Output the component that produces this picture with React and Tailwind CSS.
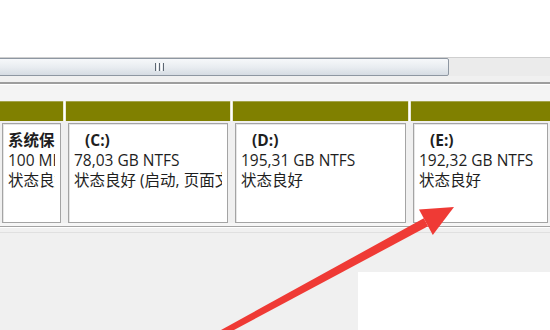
import React from 'react';

const partitions = [
  { width: 'w-[63px]', name: '系统保留', nameBold: true, size: '100 MB NTFS', status: '状态良好 (系统, 活动, 主分区)' },
  { width: 'w-[164px]', name: '(C:)', size: '78,03 GB NTFS', status: '状态良好 (启动, 页面文件, 故障转储, 主分区)' },
  { width: 'w-[175px]', name: '(D:)', size: '195,31 GB NTFS', status: '状态良好' },
  { width: 'flex-1', name: '(E:)', size: '192,32 GB NTFS', status: '状态良好' },
];

// one partition: olive header strip + white detail box
const Partition = ({ p, first }) => (
  <div className={`${p.width} flex flex-col shrink-0`}>
    <div className="h-[20px] bg-[#808000] border-t border-[#a3a34a]" />
    <div className="h-[2px]" />
    <div className="h-[100px] mx-[2px] bg-white border border-[#a4a4a4] shadow-[inset_1px_1px_0_#e6e6e6]">
      <div className="pt-[6px] pl-[5px] pr-[5px] overflow-hidden whitespace-nowrap text-[15.5px] leading-[20px] text-[#1e1e1e]">
        <div className={`font-bold overflow-hidden ${first ? '' : 'pl-[11px]'}`}>{p.name}</div>
        <div className="overflow-hidden">{p.size}</div>
        <div className="overflow-hidden">{p.status}</div>
      </div>
    </div>
  </div>
);

const Divider = () => (
  <div className="w-[3px] shrink-0 flex flex-col">
    <div className="h-[20px] bg-[#e9e9d6] flex justify-center">
      <div className="w-px bg-white" />
    </div>
    <div className="flex-1 bg-[#f0f0f0]" />
  </div>
);

export default function App() {
  return (
    <div className="w-[550px] h-[330px] relative overflow-hidden bg-[#f0f0f0] font-['Open_Sans','Noto_Sans_CJK_SC',sans-serif]">
      <div className="h-[57px] bg-white" />

      {/* horizontal scrollbar */}
      <div className="flex h-[19px] border-t border-[#cfcfcf]">
        <div className="ml-[-130px] w-[579px] shrink-0 rounded-[2px] border border-[#8e97a2] bg-gradient-to-b from-[#f6f8fa] via-[#e9edf1] to-[#d6dce3] flex items-center justify-center">
          <div className="flex gap-[1px] h-[8px]">
            <div className="w-px bg-[#5d6772]" />
            <div className="w-px bg-[#ffffff]" />
            <div className="w-px bg-[#5d6772]" />
            <div className="w-px bg-[#ffffff]" />
            <div className="w-px bg-[#5d6772]" />
          </div>
        </div>
        <div className="flex-1 bg-[#ebebeb]" />
      </div>

      <div className="h-[6px] bg-[#f0f0f0]" />
      <div className="h-[2px] bg-[#9d9d9d]" />
      <div className="h-px bg-white" />
      <div className="h-[16px] bg-[#f4f4f4]" />

      {/* partition row */}
      <div className="flex">
        {partitions.map((p, i) => (
          <React.Fragment key={p.name}>
            {i > 0 && <Divider />}
            <Partition p={p} first={i === 0} />
          </React.Fragment>
        ))}
      </div>

      <div className="h-[3px] bg-[#f6f6f6]" />
      <div className="h-px bg-[#a3a3a3]" />
      <div className="h-px bg-white" />
      <div className="h-[4px] bg-[#f0f0f0]" />
      <div className="h-px bg-[#e0e0e0]" />

      <div className="flex justify-end pt-[39px]">
        <div className="w-[192px] h-[60px] bg-white" />
      </div>

      {/* red annotation arrow */}
      <svg className="absolute inset-0 pointer-events-none" width="550" height="330" viewBox="0 0 550 330">
        <polygon points="423.8,218.3 428,226.3 209.3,343.2 206.5,338" fill="#ef3a35" />
        <polygon points="454,207 432.8,235 419,209.6" fill="#ef3a35" />
      </svg>
    </div>
  );
}
